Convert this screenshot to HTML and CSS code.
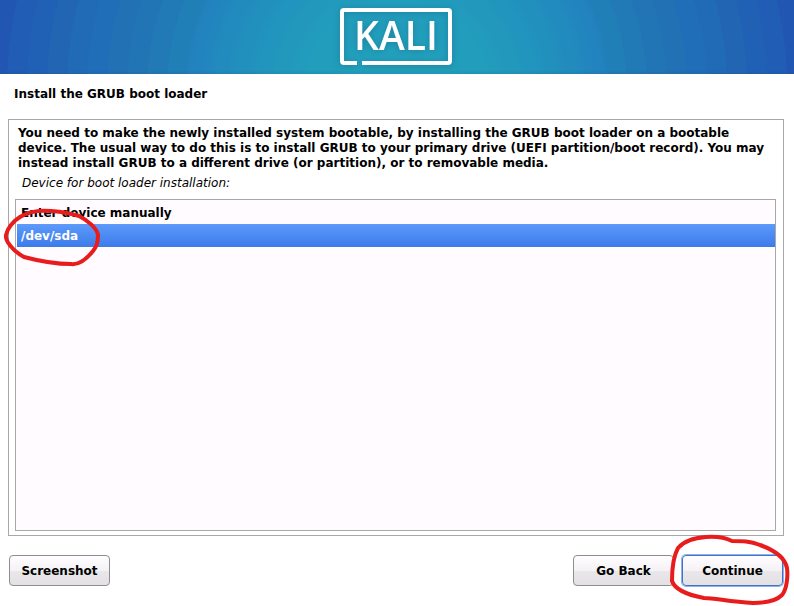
FILE: index.html
```html
<!DOCTYPE html>
<html lang="en">
<head>
<meta charset="utf-8">
<meta name="viewport" content="width=device-width, initial-scale=1">
<title>Install the GRUB boot loader</title>
<link rel="stylesheet" href="styles.css">
</head>
<body>
<header class="banner">
  <div class="logo">
    <svg class="logo-frame" viewBox="0 0 112 58" aria-hidden="true">
      <path d="M17 55H4Q2 55 2 53V4Q2 2 4 2H108Q110 2 110 4V53Q110 55 108 55H22"/>
    </svg>
    <span class="logo-text">KALI</span>
  </div>
</header>
<form class="installer">
  <h1 class="title">Install the GRUB boot loader</h1>
  <main class="panel">
    <p class="message">You need to make the newly installed system bootable, by installing the GRUB boot loader on a bootable device. The usual way to do this is to install GRUB to your primary drive (UEFI partition/boot record). You may instead install GRUB to a different drive (or partition), or to removable media.</p>
    <p class="prompt" id="prompt">Device for boot loader installation:</p>
    <div class="devices" role="radiogroup" aria-labelledby="prompt">
      <label class="device"><input type="radio" name="device" value="manual">Enter device manually</label>
      <label class="device"><input type="radio" name="device" value="sda" checked>/dev/sda
        <svg class="mark mark-device" viewBox="0 0 100 62" aria-hidden="true">
          <path d="M17 10C26 4 36 3 48 4C60 5 70 7 76 9C84 13 94 21 95 28C95 37 93 40 90 44C82 54 75 58 68 57C54 57 36 54 21 50C10 44 2 34 3 28C4 22 10 14 17 10"/>
        </svg>
      </label>
    </div>
  </main>
  <footer class="actions">
    <button class="button" type="button">Screenshot</button>
    <div class="steps">
      <button class="button" type="button">Go Back</button>
      <div class="marked">
        <button class="button primary" type="submit">Continue</button>
        <svg class="mark mark-continue" viewBox="0 0 122 72" aria-hidden="true">
          <path d="M62 8C56 5 49 3 36 4C22 5 13 9 8 15C3 24 2 38 2 48C5 57 18 62 34 65C46 65 59 69 83 70C98 70 107 67 112 62C117 56 118 43 117 35C115 25 104 17 90 12C80 8 72 8 62 8"/>
        </svg>
      </div>
    </div>
  </footer>
</form>
</body>
</html>
```
FILE: styles.css
```css
* {
  box-sizing: border-box;
}

body {
  margin: 0;
  min-height: 100vh;
  display: flex;
  flex-direction: column;
  background: #fff;
  color: #000;
  font: bold 12px/15px "DejaVu Sans", sans-serif;
}

.banner {
  height: 74px;
  display: flex;
  justify-content: center;
  align-items: center;
  padding-right: 2px;
  background:
    linear-gradient(transparent 70px, #1040601c 74px),
    radial-gradient(circle 410px at 50% 89px,
      #22a0bd 0 50px,
      #229dbc 70px 90px,
      #2299bc 110px 120px,
      #2195bd 130px 140px,
      #2190bd 150px 160px,
      #228bbe 170px 180px,
      #2286be 190px,
      #2282be 208px,
      #207fb6 212px 230px,
      #217ab6 230px 250px,
      #2275b5 250px 270px,
      #2271b4 270px 290px,
      #206eb8 290px 310px,
      #216ab6 310px 330px,
      #2266b3 330px 350px,
      #2061b6 350px 370px,
      #215cb5 370px 390px,
      #2256b3 390px);
}

.logo {
  display: grid;
  align-items: start;
  justify-items: center;
  width: 112px;
  filter: drop-shadow(0 1px 3px #14648080);
}

.logo > * {
  grid-area: 1 / 1;
}

.logo-frame {
  width: 112px;
  height: 58px;
  fill: none;
  stroke: #fff;
  stroke-width: 4;
}

.logo-text {
  color: #fff;
  font: 600 39px/54px "Open Sans", sans-serif;
}

.installer {
  flex: 1;
  display: flex;
  flex-direction: column;
  padding: 13px 10px 20px 8px;
}

.title {
  margin: 0 6px 17px;
  font: inherit;
}

.panel {
  flex: 1;
  display: flex;
  flex-direction: column;
  border: 1px solid #a8a8a8;
  padding: 6px 7px 4px 6px;
}

.message {
  margin: 0 3px;
}

.prompt {
  margin: 5px 7px 8px;
  font-weight: normal;
  font-style: italic;
}

.devices {
  flex: 1;
  border: 1px solid #a8a8a8;
  padding: 1px 0 1px 1px;
  background: #fffbff;
}

.device {
  display: block;
  position: relative;
  padding: 5px 4px 3px;
}

.device input {
  position: absolute;
  opacity: 0;
}

.device:has(:checked) {
  color: #fff;
  background: linear-gradient(#5d9afb, #3c7bea);
}

.actions {
  display: flex;
  justify-content: space-between;
  margin: 19px 1px 0;
}

.steps {
  display: flex;
  gap: 8px;
}

.marked {
  position: relative;
}

.button {
  width: 101px;
  height: 31px;
  padding: 2px 0 0;
  border: 1px solid #8f8d8f;
  border-radius: 4px;
  background: linear-gradient(#fffdff, #f4f2f4 50%, #e9e7e9 51%, #e3e1e3);
  color: #000;
  font: inherit;
}

.primary {
  border-color: #4373bd;
  box-shadow: 0 0 0 1px #8ab2f5;
}

.mark {
  position: absolute;
  fill: none;
  stroke: #e81c1c;
  stroke-width: 4;
  stroke-linecap: round;
  stroke-linejoin: round;
  pointer-events: none;
}

.mark-device {
  left: -14px;
  top: -17px;
  width: 100px;
  height: 62px;
}

.mark-continue {
  left: -12px;
  top: -22px;
  width: 122px;
  height: 72px;
}
```
